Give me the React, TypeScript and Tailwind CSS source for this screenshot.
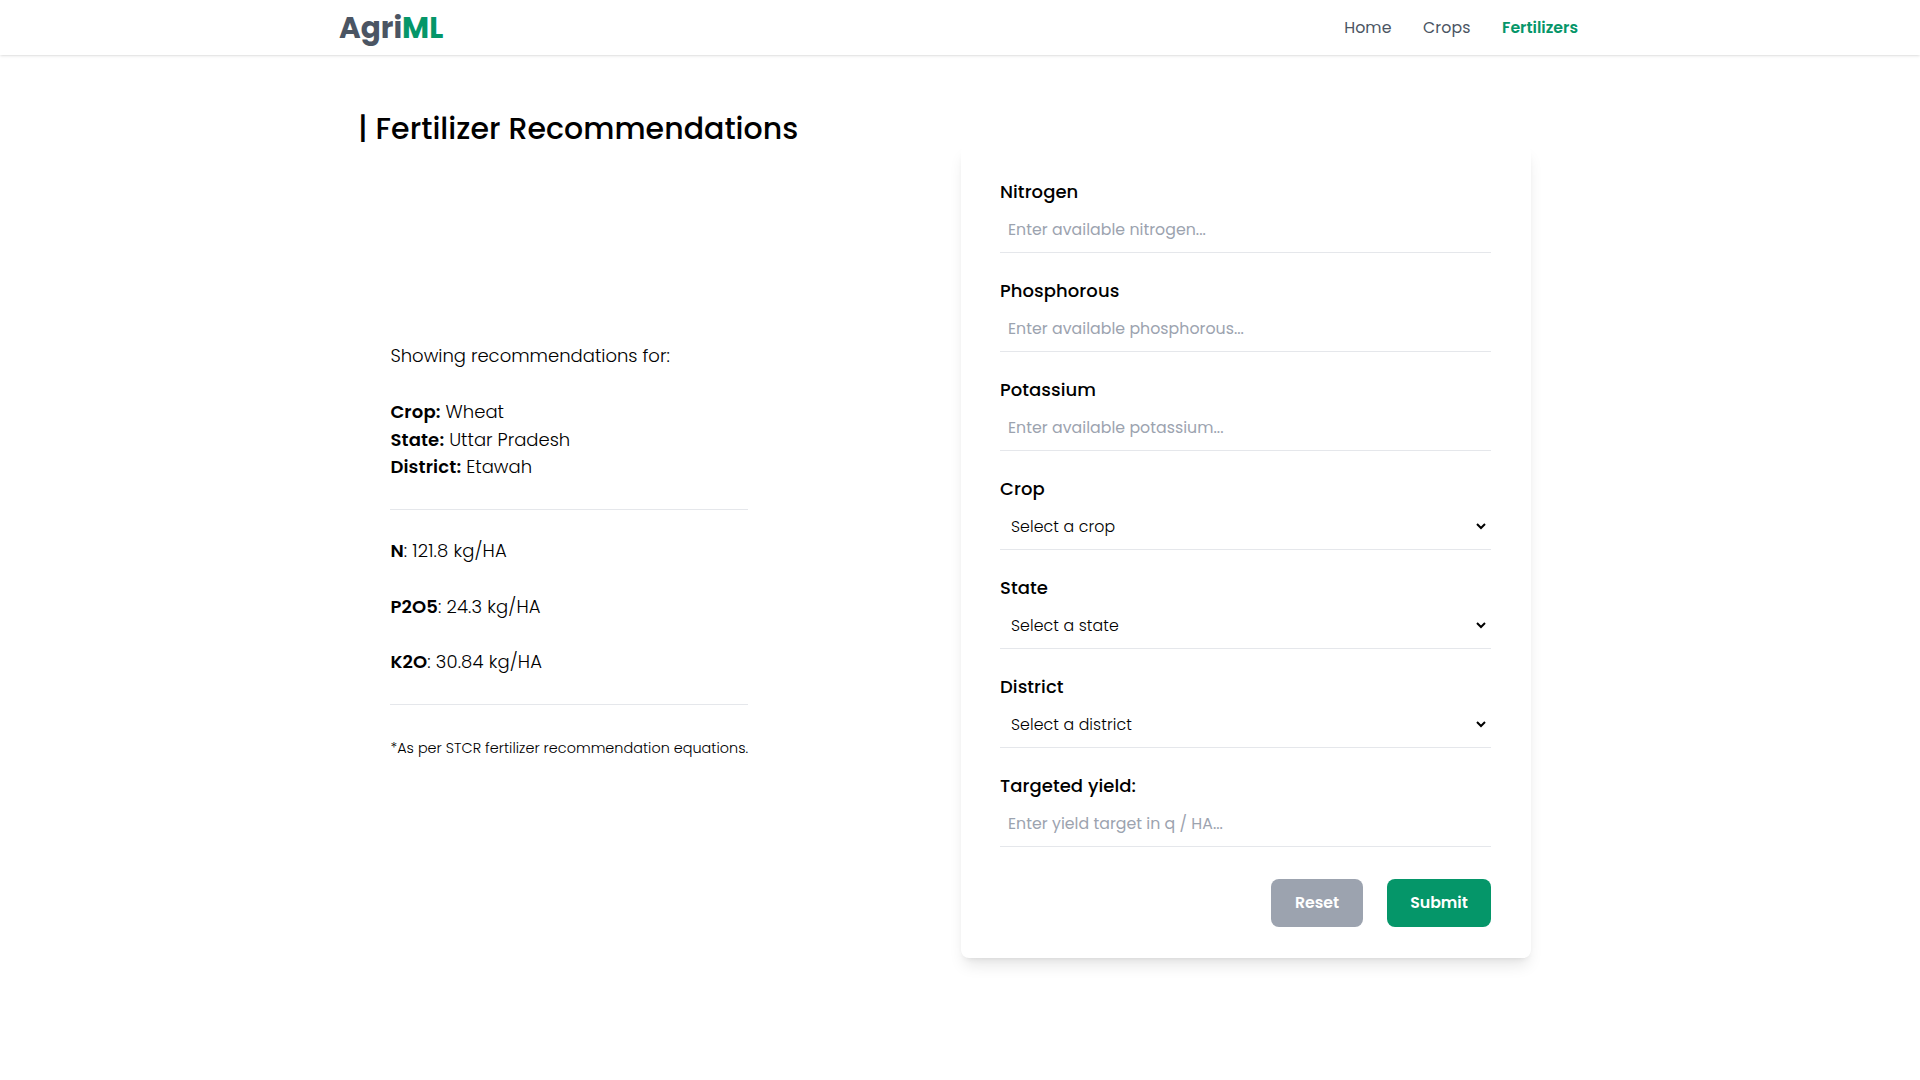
type Field = { kind: 'text' | 'select'; label: string; hint: string };

const fields: Field[] = [
  { kind: 'text', label: 'Nitrogen', hint: 'Enter available nitrogen...' },
  { kind: 'text', label: 'Phosphorous', hint: 'Enter available phosphorous...' },
  { kind: 'text', label: 'Potassium', hint: 'Enter available potassium...' },
  { kind: 'select', label: 'Crop', hint: 'Select a crop' },
  { kind: 'select', label: 'State', hint: 'Select a state' },
  { kind: 'select', label: 'District', hint: 'Select a district' },
  { kind: 'text', label: 'Targeted yield:', hint: 'Enter yield target in q / HA...' },
];

const details = [
  { name: 'Crop:', value: 'Wheat' },
  { name: 'State:', value: 'Uttar Pradesh' },
  { name: 'District:', value: 'Etawah' },
];

const nutrients = [
  { name: 'N', value: '121.8 kg/HA' },
  { name: 'P2O5', value: '24.3 kg/HA' },
  { name: 'K2O', value: '30.84 kg/HA' },
];

function Navbar() {
  return (
    <nav className="h-[55px] bg-white shadow-sm">
      <div className="mx-auto flex h-full w-[1242px] items-center justify-between pr-[3px]">
        <a href="#" className="text-[29.5px] leading-9 font-bold text-[#4b5563]">
          Agri<span className="text-[#059669]">ML</span>
        </a>
        <div className="flex gap-[31.5px] text-[15.75px] leading-6 text-[#4b5563]">
          <a href="#" className="tracking-[0.1px]">Home</a>
          <a href="#" className="tracking-[0.1px]">Crops</a>
          <a href="#" className="font-semibold text-[#059669]">Fertilizers</a>
        </div>
      </div>
    </nav>
  );
}

function Results() {
  return (
    <section className="ml-[32.4px] w-[357.6px] pt-[197px] text-lg leading-7 font-light">
      <p>Showing recommendations for:</p>
      <div className="mt-7 leading-[27.7px]">
        {details.map((d) => (
          <p key={d.name}>
            <b className="font-semibold tracking-[0.15px]">{d.name}</b> {d.value}
          </p>
        ))}
      </div>
      <hr className="mt-[27.9px] mb-[27px] border-[#e5e7eb]" />
      <div className="flex flex-col gap-[27.7px]">
        {nutrients.map((n) => (
          <p key={n.name} className="tracking-[0.14px]">
            <b className="font-semibold">{n.name}</b>: {n.value}
          </p>
        ))}
      </div>
      <hr className="mt-[27.6px] mb-[33px] border-[#e5e7eb]" />
      <p className="text-[14.4px] leading-5 tracking-[0.02px] whitespace-nowrap">*As per STCR fertilizer recommendation equations.</p>
    </section>
  );
}

function RecommendationForm() {
  return (
    <form className="mr-[31px] h-[813px] w-[570px] rounded-lg bg-white pt-[33px] pr-10 pl-[39px] shadow-lg">
      {fields.map((f) => (
        <div key={f.label} className="mb-6">
          <label className="block text-lg leading-7 font-medium tracking-[0.07px]">{f.label}</label>
          <div className="h-[47px] border-b border-[#e5e7eb]">
            {f.kind === 'text' ? (
              <input
                type="text"
                placeholder={f.hint}
                className="block h-full w-full px-2 text-[15.75px] tracking-[0.04px] placeholder:text-[#9ca3af] focus:outline-none"
              />
            ) : (
              <select className="block h-full w-[calc(100%-2px)] bg-white pr-2 pl-[7px] text-[15.75px] font-light tracking-[0.1px]">
                <option>{f.hint}</option>
              </select>
            )}
          </div>
        </div>
      ))}
      <div className="mt-8 flex justify-end gap-6 text-[15.75px] leading-6 font-semibold text-white">
        <button type="reset" className="h-12 w-[92px] rounded-lg bg-[#9ca3af]">Reset</button>
        <button type="button" className="h-12 w-[104px] rounded-lg bg-[#059669]">Submit</button>
      </div>
    </form>
  );
}

export default function App() {
  return (
    <div className="min-h-screen bg-white font-['Poppins','Inter',sans-serif] text-black">
      <Navbar />
      <main className="mx-auto w-[1204px] pt-14">
        <h1 className="h-[34px] text-[30px] leading-9 font-medium tracking-[0.04px]">| Fertilizer Recommendations</h1>
        <div className="flex justify-between">
          <Results />
          <RecommendationForm />
        </div>
      </main>
    </div>
  );
}
